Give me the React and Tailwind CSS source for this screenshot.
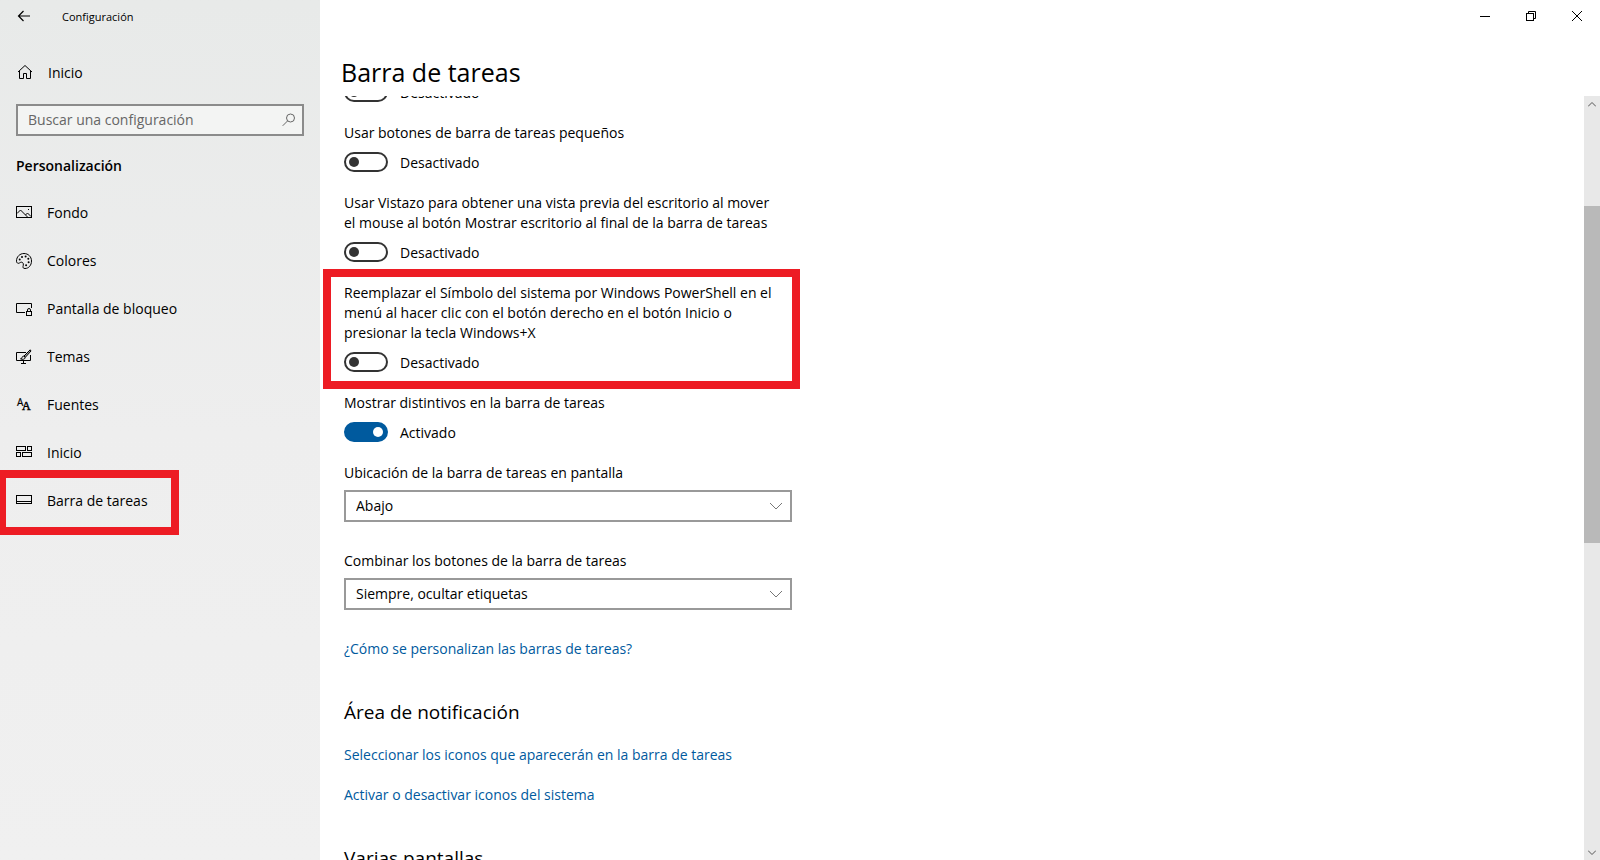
import { useState } from 'react';

const icon = {
  width: 16,
  height: 16,
  viewBox: '0 0 16 16',
  fill: 'none',
  stroke: 'currentColor',
  'aria-hidden': true,
};

const PictureIcon = () => (
  <svg {...icon}>
    <rect x="0.5" y="1.5" width="15" height="11" />
    <path d="M1 8.5L4.5 5L12 12.5M9.5 10L11.5 8L15 11.5" />
    <path d="M12 4.5h1" />
  </svg>
);

const PaletteIcon = () => (
  <svg {...icon}>
    <path d="M8 .5C12.200.5 15.500 3.700 15.500 8s-2.800 7.500-6.500 7.500c-1.600 0-2.200-.8-2-2 .2-1 .5-1.600.3-2.600-.2-1.200-1.100-1.900-2.200-1.700-1.200.2-1.800 1.300-3 1.100C1 10.100.5 9.200.5 8 .5 3.700 3.800.5 8 .5z" />
    <g fill="currentColor" stroke="none">
      <circle cx="3.700" cy="6.600" r="1" />
      <circle cx="6" cy="3.900" r="1" />
      <circle cx="9.600" cy="3.600" r="1" />
      <circle cx="12.300" cy="5.800" r="1" />
      <circle cx="12.600" cy="9.300" r="1" />
      <circle cx="10.100" cy="12.200" r="1" />
    </g>
  </svg>
);

const LockScreenIcon = () => (
  <svg {...icon}>
    <path d="M9 11.5H.5v-9h15V7" />
    <rect x="10.500" y="10.500" width="5" height="4" />
    <path d="M11.500 10.500V9a1.500 1.500 0 0 1 3 0v1.500" />
  </svg>
);

const ThemesIcon = () => (
  <svg {...icon}>
    <path d="M10 3.500H.5v8h14V6M7.500 11.500v3M5 14.500h5" />
    <path d="M14.200.8L8 7l1.300 1.300L15 2z" fill="#9a9a9a" />
    <path d="M7.800 7.200c-1.300 0-1.800.8-1.900 1.700-.1.600-.7.900-1.400.9 1.800 1 4.600.6 4.700-1.300z" />
  </svg>
);

const FontsIcon = () => (
  <svg {...icon} fill="currentColor" stroke="none">
    <text x="1" y="9" fontSize="10" fontFamily="Open Sans, sans-serif" stroke="currentColor" strokeWidth="0.200">A</text>
    <text x="6" y="13" fontSize="12" fontFamily="Liberation Serif, serif" stroke="currentColor" strokeWidth="0.500">A</text>
  </svg>
);

const TilesIcon = () => (
  <svg {...icon}>
    <rect x="0.500" y="1.500" width="9" height="4" />
    <rect x="11.500" y="1.500" width="4" height="4" />
    <rect x="0.500" y="7.500" width="4" height="4" />
    <rect x="6.500" y="7.500" width="9" height="4" />
  </svg>
);

const TaskbarIcon = () => (
  <svg {...icon}>
    <rect x="0.500" y="2.500" width="15" height="8" />
    <path d="M0 8.500h16" />
  </svg>
);

const HomeIcon = () => (
  <svg {...icon}>
    <path d="M1 8L8 1.500L15 8" />
    <path d="M2.500 7v7.500h4v-5h3v5h4V7" />
  </svg>
);

const ChevronIcon = ({ className }) => (
  <svg width="14" height="8" viewBox="0 0 14 8" fill="none" stroke="currentColor" className={className} aria-hidden="true">
    <path d="M1 1l6 6 6-6" />
  </svg>
);

const navItems = [
  { label: 'Fondo', Icon: PictureIcon },
  { label: 'Colores', Icon: PaletteIcon },
  { label: 'Pantalla de bloqueo', Icon: LockScreenIcon },
  { label: 'Temas', Icon: ThemesIcon },
  { label: 'Fuentes', Icon: FontsIcon },
  { label: 'Inicio', Icon: TilesIcon },
  { label: 'Barra de tareas', Icon: TaskbarIcon, marked: true },
];

function Toggle({ id, label, initial = false, marked = false }) {
  const [on, setOn] = useState(initial);

  return (
    <div className="relative mb-[21px]">
      {marked && (
        <div className="pointer-events-none absolute -top-[14px] -bottom-[17px] -left-[21px] w-[477px] border-8 border-[#ed1c24]" />
      )}
      {label && <p id={`${id}-label`} className="mb-[9px] max-w-[438px]">{label}</p>}
      <div className="flex h-5 items-center gap-3">
        <input
          id={id}
          type="checkbox"
          role="switch"
          aria-labelledby={label ? `${id}-label` : undefined}
          checked={on}
          onChange={() => setOn(!on)}
          className="flex h-5 w-11 appearance-none items-center rounded-full border-2 border-[#333] px-[3px] before:size-[10px] before:rounded-full before:bg-[#333] checked:justify-end checked:border-[#005a9e] checked:bg-[#005a9e] checked:before:bg-white"
        />
        <label htmlFor={id} className="pt-0.5">{on ? 'Activado' : 'Desactivado'}</label>
      </div>
    </div>
  );
}

function SelectField({ id, label, options }) {
  return (
    <div className="mb-[29px]">
      <label htmlFor={id} className="mb-[7px] block">{label}</label>
      <div className="relative w-full max-w-[448px]">
        <select id={id} className="h-8 w-full appearance-none border-2 border-[#999] bg-white px-[10px]">
          {options.map((option) => (
            <option key={option}>{option}</option>
          ))}
        </select>
        <ChevronIcon className="pointer-events-none absolute top-3 right-[9px] text-[#777]" />
      </div>
    </div>
  );
}

function Sidebar() {
  return (
    <aside className="flex w-80 shrink-0 flex-col bg-linear-to-b from-[#e8eae9] via-[#eeeeee] to-[#f0f0f0]">
      <div className="flex h-8 items-center">
        <button aria-label="Atrás" className="flex h-8 w-12 items-center justify-center">
          <svg width="14" height="12" viewBox="0 0 14 12" fill="none" stroke="currentColor" strokeWidth="1.200">
            <path d="M13 6H1.500M6.500 1l-5 5 5 5" />
          </svg>
        </button>
        <span className="ml-[14px] pt-0.5 text-[11px]">Configuración</span>
      </div>

      <a href="#inicio" className="mt-4 flex h-12 items-center gap-[15px] px-[17px]">
        <HomeIcon />
        <span className="pt-0.5">Inicio</span>
      </a>

      <div className="relative mx-4 mt-2">
        <input
          type="text"
          aria-label="Buscar una configuración"
          placeholder="Buscar una configuración"
          className="h-8 w-full border-2 border-[#8b8b8b] bg-[#f3f4f3] pr-8 pb-0.5 pl-[10px] placeholder:text-[#666]"
        />
        <svg width="14" height="14" viewBox="0 0 14 14" fill="none" stroke="#666" className="absolute top-[9px] right-2" aria-hidden="true">
          <circle cx="8.500" cy="5" r="4" />
          <path d="M5.700 7.800L.7 12.800" />
        </svg>
      </div>

      <h2 className="mx-4 mt-5 mb-[13px] font-semibold">Personalización</h2>

      <nav>
        {navItems.map(({ label, Icon, marked }) => (
          <a key={label} href="#" className="relative flex h-12 items-center gap-[15px] px-4">
            <Icon />
            {label}
            {marked && (
              <span className="pointer-events-none absolute -top-[7px] -bottom-[10px] left-0 w-[179px] border-8 border-l-6 border-[#ed1c24]" />
            )}
          </a>
        ))}
      </nav>
    </aside>
  );
}

function WindowControls() {
  return (
    <div className="flex h-8 justify-end">
      <button aria-label="Minimizar" className="flex w-[46px] items-center justify-center">
        <svg width="10" height="10" viewBox="0 0 10 10" stroke="currentColor">
          <path d="M0 5.500h10" />
        </svg>
      </button>
      <button aria-label="Restaurar" className="flex w-[46px] items-center justify-center">
        <svg width="10" height="10" viewBox="0 0 10 10" fill="none" stroke="currentColor">
          <rect x="0.500" y="2.500" width="7" height="7" />
          <path d="M2.500 2.500v-2h7v7h-2" />
        </svg>
      </button>
      <button aria-label="Cerrar" className="flex w-[46px] items-center justify-center">
        <svg width="10" height="10" viewBox="0 0 10 10" stroke="currentColor">
          <path d="M0 0l10 10M10 0L0 10" />
        </svg>
      </button>
    </div>
  );
}

function Scrollbar() {
  return (
    <div className="flex w-4 shrink-0 flex-col bg-[#e8e8e8] text-[#555]">
      <button aria-label="Subir" className="flex h-4 items-center justify-center">
        <svg width="8" height="5" viewBox="0 0 8 5" fill="none" stroke="currentColor">
          <path d="M0 4.500l4-4 4 4" />
        </svg>
      </button>
      <div className="flex-[94]" />
      <div className="flex-[337] bg-[#b9b9b9]" />
      <div className="flex-[301]" />
      <button aria-label="Bajar" className="flex h-4 items-center justify-center">
        <svg width="8" height="5" viewBox="0 0 8 5" fill="none" stroke="currentColor">
          <path d="M0 .5l4 4 4-4" />
        </svg>
      </button>
    </div>
  );
}

export default function App() {
  return (
    <div className="flex h-screen overflow-hidden bg-white font-['Open_Sans',sans-serif] text-[14px] leading-5 text-black">
      <Sidebar />

      <main className="flex min-w-0 flex-1 flex-col">
        <WindowControls />
        <h1 className="flex h-16 items-center pt-4 pl-[21px] text-[25px] leading-8">Barra de tareas</h1>

        <div className="flex min-h-0 flex-1">
          <div className="min-w-0 flex-1 overflow-hidden px-6">
            {/* scrolled part way down the page */}
            <div className="-mt-[14px] max-w-[448px]">
              <Toggle id="ocultar" />
              <Toggle id="pequenos" label="Usar botones de barra de tareas pequeños" />
              <Toggle
                id="vistazo"
                label="Usar Vistazo para obtener una vista previa del escritorio al mover el mouse al botón Mostrar escritorio al final de la barra de tareas"
              />
              <Toggle
                id="powershell"
                label="Reemplazar el Símbolo del sistema por Windows PowerShell en el menú al hacer clic con el botón derecho en el botón Inicio o presionar la tecla Windows+X"
                marked
              />
              <Toggle id="distintivos" label="Mostrar distintivos en la barra de tareas" initial />

              <SelectField
                id="ubicacion"
                label="Ubicación de la barra de tareas en pantalla"
                options={['Abajo', 'Arriba', 'Izquierda', 'Derecha']}
              />
              <SelectField
                id="combinar"
                label="Combinar los botones de la barra de tareas"
                options={['Siempre, ocultar etiquetas', 'Si la barra está llena', 'Nunca']}
              />

              <a href="#ayuda" className="block text-[#005a9e]">¿Cómo se personalizan las barras de tareas?</a>

              <h2 className="mt-[39px] mb-[19px] text-[19px] leading-7">Área de notificación</h2>
              <a href="#iconos" className="mb-5 block text-[#005a9e]">Seleccionar los iconos que aparecerán en la barra de tareas</a>
              <a href="#sistema" className="block text-[#005a9e]">Activar o desactivar iconos del sistema</a>

              <h2 className="mt-[39px] mb-[19px] text-[19px] leading-7">Varias pantallas</h2>
            </div>
          </div>
          <Scrollbar />
        </div>
      </main>
    </div>
  );
}
